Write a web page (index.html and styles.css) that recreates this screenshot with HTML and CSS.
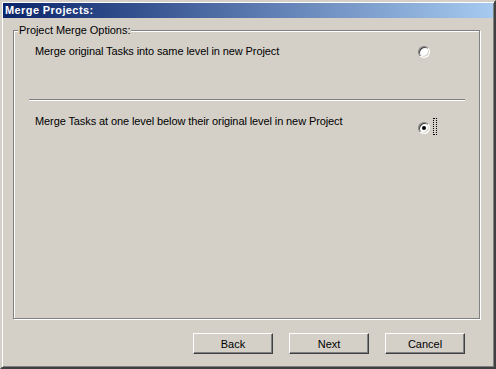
FILE: index.html
```html
<!DOCTYPE html>
<html lang="en">
<head>
    <meta charset="UTF-8">
    <title>Merge Projects</title>
    <link rel="stylesheet" href="styles.css">
</head>
<body>

    <div class="window">
        <div class="titlebar">Merge Projects:</div>

        <fieldset class="group">
            <legend>Project Merge Options:</legend>

            <div class="option first">
                <span class="label">Merge original Tasks into same level in new Project</span>
                <span class="radio"></span>
            </div>

            <hr class="separator">

            <div class="option second">
                <span class="label">Merge Tasks at one level below their original level in new Project</span>
                <span class="radio checked"></span>
                <span class="focus"></span>
            </div>
        </fieldset>

        <div class="buttons">
            <button class="btn">Back</button>
            <button class="btn">Next</button>
            <button class="btn">Cancel</button>
        </div>
    </div>

</body>
</html>
```

FILE: styles.css
```css
body {
    margin: 0;
    padding: 0;
    font-family: 'Liberation Sans', Arial, sans-serif;
    font-size: 11px;
    line-height: 13px;
    color: #000;
    background-color: #d4d0c8;
}

.window {
    width: 496px;
    height: 369px;
    box-sizing: border-box;
    display: flex;
    flex-direction: column;
    padding: 1px;
    background-color: #d4d0c8;
    border: 2px solid;
    border-color: #d4d0c8 #404040 #404040 #d4d0c8;
    box-shadow: inset 1px 1px #fff, inset -1px -1px #808080;
}

.titlebar {
    height: 15px;
    line-height: 15px;
    padding-left: 2px;
    color: #fff;
    font-weight: bold;
    letter-spacing: 0.4px;
    background: linear-gradient(to right, #0a246a, #a6caf0);
}

/* Group box */
.group {
    flex: 1;
    min-width: 0;
    margin: 6px 13px 14px 10px;
    padding: 0;
    border: 1px solid #808080;
    box-shadow: inset 1px 1px #fff, 1px 1px #fff;
}

.group legend {
    margin-left: 4px;
    padding: 0 1px;
    background-color: #d4d0c8;
    letter-spacing: -0.05px;
}

.option {
    display: flex;
    align-items: flex-start;
    padding-left: 21px;
}

.option .label {
    width: 383px;
    letter-spacing: -0.1px;
}

.option.first {
    margin-top: 5px;
    height: 57px;
}

.option.first .label {
    padding-top: 3px;
}

.option.first .radio {
    margin-top: 4px;
}

.option.second {
    margin-top: 12px;
}

.option.second .label {
    padding-top: 2px;
}

.option.second .radio {
    margin-top: 9px;
}

.separator {
    margin: 0 14px 0 15px;
    height: 0;
    border: none;
    border-top: 1px solid #808080;
    border-bottom: 1px solid #fff;
}

/* Classic radio button */
.radio {
    position: relative;
    flex: none;
    width: 12px;
    height: 12px;
    box-sizing: border-box;
    border-radius: 50%;
    background-color: #fff;
    border: 1px solid;
    border-color: #808080 #fff #fff #808080;
    box-shadow: inset 1px 1px #404040, inset -1px -1px #d4d0c8;
}

.radio.checked::after {
    content: "";
    position: absolute;
    left: 3px;
    top: 3px;
    width: 4px;
    height: 4px;
    border-radius: 50%;
    background-color: #000;
}

.focus {
    width: 2px;
    height: 15px;
    margin: 5px 0 0 3px;
    border: 1px dotted #000;
}

/* Buttons */
.buttons {
    display: flex;
    justify-content: flex-end;
    gap: 16px;
    padding: 0 28px 12px 0;
}

.btn {
    width: 80px;
    height: 21px;
    padding: 0;
    font-family: 'Liberation Sans', Arial, sans-serif;
    font-size: 11px;
    color: #000;
    background-color: #d4d0c8;
    border: 1px solid;
    border-color: #fff #404040 #404040 #fff;
    box-shadow: inset -1px -1px #808080;
    border-radius: 0;
}
```
